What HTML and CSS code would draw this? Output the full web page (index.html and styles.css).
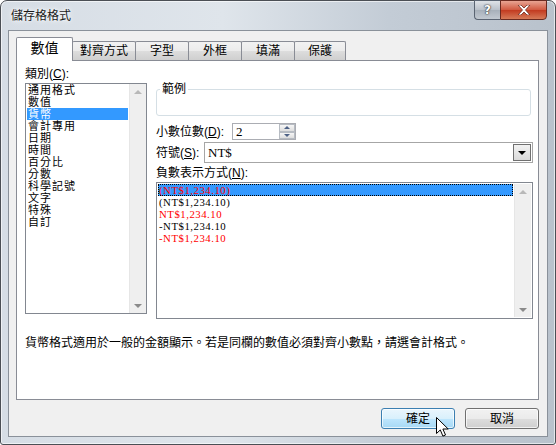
FILE: index.html
```html
<!DOCTYPE html>
<html lang="zh-Hant">
<head>
<meta charset="utf-8">
<title>儲存格格式</title>
<link rel="stylesheet" href="styles.css">
</head>
<body>
<div class="window">
  <div class="titlebar">
    <span class="title">儲存格格式</span>
    <div class="caption-btns">
      <div class="cbtn help">?</div>
      <div class="cbtn close"><svg width="14" height="10" viewBox="0 0 14 10"><path d="M1 0h3l3 3 3-3h3l-4.5 5 4.5 5h-3l-3-3-3 3h-3l4.5-5z" fill="#fff" stroke="#6b2a20" stroke-width="0.8"/></svg></div>
    </div>
  </div>
  <div class="client">
    <div class="tabs">
      <div class="tab active">數值</div>
      <div class="tab w64">對齊方式</div>
      <div class="tab">字型</div>
      <div class="tab">外框</div>
      <div class="tab">填滿</div>
      <div class="tab w51">保護</div>
    </div>
    <div class="panel">
      <div class="cols">
        <div class="leftcol">
          <div class="label">類別(<u>C</u>):</div>
          <div class="listbox cat">
            <div class="items">
              <div class="item">通用格式</div>
              <div class="item">數值</div>
              <div class="item sel">貨幣</div>
              <div class="item">會計專用</div>
              <div class="item">日期</div>
              <div class="item">時間</div>
              <div class="item">百分比</div>
              <div class="item">分數</div>
              <div class="item">科學記號</div>
              <div class="item">文字</div>
              <div class="item">特殊</div>
              <div class="item">自訂</div>
            </div>
            <div class="vscroll"><span class="arr up"></span><span class="arr down"></span></div>
          </div>
        </div>
        <div class="rightcol">
          <fieldset class="sample"><legend>範例</legend></fieldset>
          <div class="row decimals">
            <span class="label">小數位數(<u>D</u>):</span>
            <div class="spin">
              <span class="val">2</span>
              <div class="spinbtns"><span class="sb"><i class="tri up"></i></span><span class="sb"><i class="tri down"></i></span></div>
            </div>
          </div>
          <div class="row symbol">
            <span class="label">符號(<u>S</u>):</span>
            <div class="combo">
              <span class="val">NT$</span>
              <span class="dd"><i class="tri down blk"></i></span>
            </div>
          </div>
          <div class="label neglabel">負數表示方式(<u>N</u>):</div>
          <div class="listbox neg">
            <div class="items">
              <div class="item num red sel2">(NT$1,234.10)</div>
              <div class="item num">(NT$1,234.10)</div>
              <div class="item num red">NT$1,234.10</div>
              <div class="item num">-NT$1,234.10</div>
              <div class="item num red">-NT$1,234.10</div>
            </div>
            <div class="vscroll"><span class="arr up"></span><span class="arr down"></span></div>
          </div>
        </div>
      </div>
      <div class="desc">貨幣格式適用於一般的金額顯示。若是同欄的數值必須對齊小數點，請選會計格式。</div>
    </div>
    <div class="buttons">
      <div class="btn default">確定</div>
      <div class="btn">取消</div>
    </div>
  </div>
  <svg class="cursor" width="14" height="22" viewBox="0 0 14 22"><path d="M0.5 0.5v16l3.8-3.6 2.6 6.2 2.6-1.1-2.6-6h5.3z" fill="#fff" stroke="#000" stroke-width="1"/></svg>
</div>
</body>
</html>
```

FILE: styles.css
```css
* { box-sizing: border-box; }
html, body { margin: 0; padding: 0; background: #fff; }
body { width: 556px; height: 445px; overflow: hidden; font-family: "Liberation Sans", "Noto Sans CJK TC", sans-serif; font-size: 12px; color: #000; }

.window {
  position: relative;
  width: 556px; height: 445px;
  border: 1px solid #4b4f55;
  border-radius: 7px 7px 3px 3px;
  background: linear-gradient(90deg, #d6dde5 0%, #dfe5eb 40%, #c3ccd6 70%, #b9c2cc 100%);
  display: flex; flex-direction: column;
  box-shadow: inset 0 0 0 1px rgba(255,255,255,0.6);
}
.titlebar {
  height: 29px; display: flex; align-items: flex-start; justify-content: space-between;
  padding-left: 10px;
}
.title { line-height: 12px; margin-top: 9px; font-size: 12px; color: #1a1a1a; text-shadow: 0 0 6px #fff, 0 0 3px #fff; }
.caption-btns { display: flex; margin-right: 8px; margin-top: -1px; }
.cbtn { height: 20px; border: 1px solid #5a6472; display: flex; align-items: center; justify-content: center; }
.help { width: 26px; border-radius: 0 0 0 4px; border-right: none; background: linear-gradient(#dfe3e8, #b9c0c9 50%, #a7b0ba 51%, #c2c9d1); color: #fff; font-weight: bold; font-family: "DejaVu Sans", sans-serif; font-size: 12px; text-shadow: 0 0 2px #333, 0 0 1px #000; }
.close { width: 47px; border-radius: 0 0 4px 0; background: linear-gradient(#e8a493, #d0583f 50%, #c23a20 51%, #d67a58); border-color: #6b2a20; }

.client {
  flex: 1; margin: 0 7px 7px 7px;
  background: #f0f0f0;
  border: 1px solid #8a919a;
  padding: 6px 8px 0 7px;
  display: flex; flex-direction: column;
}
.tabs { display: flex; height: 23px; align-items: flex-end; position: relative; z-index: 1; }
.tab {
  width: 54px; height: 19px; border: 1px solid #898c95; border-bottom: none; margin-left: -1px;
  background: linear-gradient(#f2f2f2, #ebebeb 50%, #dddddd 51%, #cfcfcf);
  display: flex; align-items: center; justify-content: center; line-height: 12px;
  border-radius: 2px 2px 0 0;
}
.tab.w64 { width: 64px; }
.tab.w51 { width: 52px; }
.tab.active { height: 24px; background: #fff; margin-left: 0; width: 57px; margin-bottom: -1px; font-size: 14px; padding-bottom: 3px; }
.panel {
  height: 340px; background: #fff; border: 1px solid #898c95;
  padding: 6px 7px 0 8px;
  display: flex; flex-direction: column;
}
.cols { display: flex; gap: 9px; }
.label { line-height: 12px; white-space: nowrap; }
.label u { text-decoration: underline; }
.leftcol { width: 122px; display: flex; flex-direction: column; }
.leftcol .label { height: 16px; padding-top: 1px; }
.listbox { border: 1px solid #828790; display: flex; background: #fff; }
.listbox.cat { height: 231px; }
.items { flex: 1; padding: 0 1px; }
.item { height: 12px; line-height: 12px; padding-left: 1px; white-space: nowrap; font-size: 11px; letter-spacing: 1px; }
.item.sel { background: #3399ff; color: #fff; }
.vscroll { width: 17px; background: #efefef; border-left: 1px solid #e6e6e6; display: flex; flex-direction: column; justify-content: space-between; align-items: center; padding: 6px 0 5px; }
.arr { width: 0; height: 0; border-left: 4px solid transparent; border-right: 4px solid transparent; }
.arr.up { border-bottom: 4px solid #b8b8b8; }
.arr.down { border-top: 4px solid #8a8a8a; }

.rightcol { width: 375px; display: flex; flex-direction: column; }
.sample {
  margin: 16px 0 0 0; padding: 0; height: 33px;
  border: 1px solid #d5dfe5; border-radius: 3px;
}
.sample legend { padding: 0 2px; margin-left: 3px; line-height: 12px; font-size: 12px; }
.row { display: flex; align-items: center; }
.decimals { margin-top: 7px; height: 17px; }
.decimals .label { width: 76px; }
.spin { width: 64px; height: 17px; border: 1px solid #abadb3; display: flex; }
.val { font-family: "Liberation Serif", serif; font-size: 13px; line-height: 15px; padding-left: 3px; flex: 1; }
.spinbtns { width: 16px; display: flex; flex-direction: column; }
.sb { flex: 1; border: 1px solid #b7bcc3; background: linear-gradient(#f6f6f6, #dedede); display: flex; align-items: center; justify-content: center; }
.tri { width: 0; height: 0; border-left: 3px solid transparent; border-right: 3px solid transparent; }
.tri.up { border-bottom: 3px solid #4d6185; }
.tri.down { border-top: 3px solid #4d6185; }
.tri.blk { border-left-width: 4px; border-right-width: 4px; border-top: 4px solid #000; }
.symbol { margin-top: 2px; height: 21px; }
.symbol .label { width: 48px; }
.combo { flex: 1; height: 21px; border: 1px solid #a6a6a6; display: flex; margin-right: -2px; }
.combo .val { font-family: "Liberation Serif", serif; font-size: 13px; line-height: 19px; padding-left: 3px; }
.dd { width: 18px; border: 1px solid #707070; background: linear-gradient(#f2f2f2, #dadada); margin: 1px; display: flex; align-items: center; justify-content: center; }
.neglabel { margin-top: 4px; height: 15px; }
.listbox.neg { height: 137px; margin-right: -2px; padding-top: 1px; }
.listbox.neg .vscroll { margin-bottom: 1px; margin-right: 1px; }
.item.num { font-family: "Liberation Serif", serif; font-size: 10.8px; letter-spacing: 0.5px; line-height: 12px; height: 12px; }
.item.red { color: #ff0000; }
.item.sel2 { background: #3399ff; outline: 1px dotted #000; outline-offset: -1px; }
.desc { margin-top: 18px; line-height: 12px; white-space: nowrap; }

.buttons { display: flex; justify-content: flex-end; gap: 10px; padding: 8px 0 0 0; }
.btn {
  width: 74px; height: 21px; border: 1px solid #707070; border-radius: 3px;
  background: linear-gradient(#f2f2f2, #ebebeb 50%, #dddddd 51%, #cfcfcf);
  display: flex; align-items: center; justify-content: center; line-height: 12px;
  box-shadow: inset 0 0 0 1px rgba(255,255,255,0.7);
}
.btn.default { border-color: #3c7fb1; background: linear-gradient(#eaf6fd, #d9f0fc 50%, #bee6fd 51%, #a7d9f5); }
.cursor { position: absolute; left: 435px; top: 416px; }
```
